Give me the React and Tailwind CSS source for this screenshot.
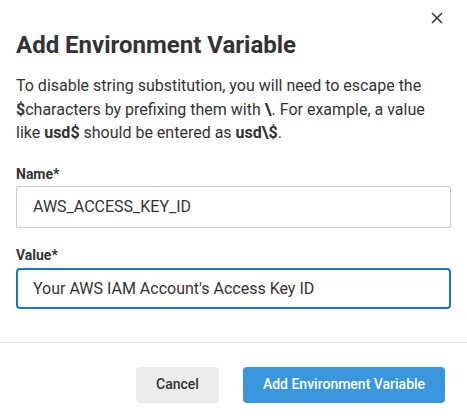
import React from 'react';

const CloseIcon = () => (
  <svg width="12" height="12" viewBox="0 0 12 12" fill="none">
    <path d="M1 1L11 11M11 1L1 11" stroke="#3a3a3a" strokeWidth="1.6" />
  </svg>
);

export default function App() {
  return (
    <div
      className="w-[467px] h-[418px] bg-white text-[#333] flex flex-col"
      style={{ fontFamily: 'Roboto, "Liberation Sans", sans-serif' }}
    >
      {/* Header */}
      <div className="flex justify-end pt-[12px] pr-[24px] h-[28px]">
        <button className="w-[12px] h-[12px] flex items-center justify-center">
          <CloseIcon />
        </button>
      </div>

      <div className="px-[16px]">
        <h1 className="text-[24px] leading-[32px] font-bold mt-[1px]">Add Environment Variable</h1>
        <p className="text-[16px] leading-[23.5px] mt-[13px]">
          To disable string substitution, you will need to escape the{' '}
          <br />
          <b>$</b>characters by prefixing them with <b>\</b>. For example, a value like{' '}
          <b>usd$</b> should be entered as <b>usd\$</b>.
        </p>

        <label className="block text-[14px] leading-[20px] font-bold mt-[19px] mb-[2px]">Name*</label>
        <input
          readOnly
          value="AWS_ACCESS_KEY_ID"
          className="w-full h-[42px] border border-[#cacaca] rounded-[2px] px-[16px] text-[16px] text-[#333] outline-none"
        />

        <label className="block text-[14px] leading-[20px] font-bold mt-[17px] mb-[3px]">Value*</label>
        <input
          readOnly
          value="Your AWS IAM Account's Access Key ID"
          className="w-full h-[41px] border-2 border-[#1a74cc] rounded-[4px] px-[15px] text-[16px] text-[#333] outline-none"
        />
      </div>

      <div className="border-t border-[#e2e2e2] mt-[33px]" />

      <div className="flex justify-end gap-[24px] px-[22px] pt-[24px]">
        <button className="h-[36px] w-[83px] rounded-[4px] bg-[#ececec] text-[14px] font-medium text-[#333]">
          Cancel
        </button>
        <button className="h-[36px] w-[202px] rounded-[4px] bg-[#3a96dd] text-[14px] font-medium text-white">
          Add Environment Variable
        </button>
      </div>
    </div>
  );
}
